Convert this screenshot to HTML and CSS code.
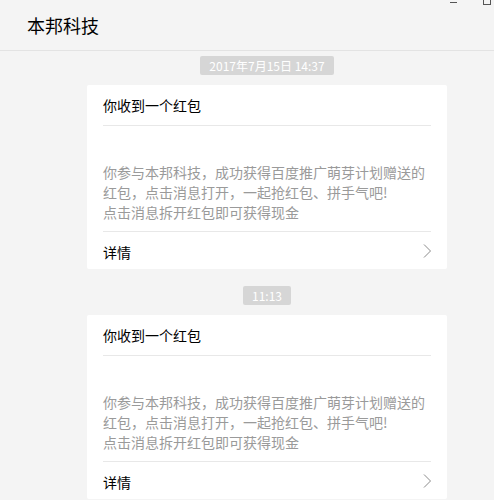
FILE: index.html
```html
<!DOCTYPE html>
<html lang="zh">
<head>
<meta charset="utf-8">
<link rel="stylesheet" href="styles.css">
</head>
<body>
<div class="window">
  <header class="header">
    <h1 class="title">本邦科技</h1>
    <div class="win-btns">
      <span class="win-min"></span>
      <span class="win-max"></span>
    </div>
  </header>
  <main class="feed">
    <div class="stamp-row"><span class="stamp">2017年7月15日 14:37</span></div>
    <section class="card">
      <div class="card-title">你收到一个红包</div>
      <div class="card-body">你参与本邦科技，成功获得百度推广萌芽计划赠送的红包，点击消息打开，一起抢红包、拼手气吧!<br>点击消息拆开红包即可获得现金</div>
      <div class="card-foot">
        <span>详情</span>
        <svg class="chev" width="9" height="14" viewBox="0 0 9 14"><polyline points="1,0.5 7.5,7 1,13.5" fill="none" stroke="#8a8a8a" stroke-width="1"/></svg>
      </div>
    </section>
    <div class="stamp-row second"><span class="stamp">11:13</span></div>
    <section class="card">
      <div class="card-title">你收到一个红包</div>
      <div class="card-body">你参与本邦科技，成功获得百度推广萌芽计划赠送的红包，点击消息打开，一起抢红包、拼手气吧!<br>点击消息拆开红包即可获得现金</div>
      <div class="card-foot">
        <span>详情</span>
        <svg class="chev" width="9" height="14" viewBox="0 0 9 14"><polyline points="1,0.5 7.5,7 1,13.5" fill="none" stroke="#8a8a8a" stroke-width="1"/></svg>
      </div>
    </section>
  </main>
</div>
</body>
</html>
```
FILE: styles.css
```css
html, body {
  margin: 0;
  padding: 0;
  background: #f4f4f4;
  font-family: "Noto Sans CJK SC", "Noto Sans", sans-serif;
}
.window {
  width: 494px;
  height: 500px;
  overflow: hidden;
  position: relative;
}
.header {
  height: 50px;
  border-bottom: 1px solid #e3e3e3;
  padding-left: 27px;
  box-sizing: content-box;
  position: relative;
}
.title {
  margin: 0;
  font-size: 18px;
  font-weight: normal;
  color: #000;
  line-height: 50px;
}
.win-min {
  position: absolute;
  left: 450px;
  top: 2px;
  width: 7px;
  height: 1px;
  background: #555;
}
.win-max {
  position: absolute;
  left: 483px;
  top: -4px;
  width: 6px;
  height: 7px;
  border: 1px solid #555;
}
.feed {
  width: 360px;
  margin-left: 87px;
  padding-top: 5px;
}
.stamp-row {
  display: flex;
  justify-content: center;
  margin-bottom: 10px;
}
.stamp-row.second {
  margin-top: 17px;
}
.stamp {
  background: #d6d6d6;
  color: #fff;
  font-size: 12px;
  line-height: 19px;
  height: 19px;
  padding: 0 9px;
  border-radius: 2px;
}
.card {
  background: #fff;
  border-radius: 2px;
  padding: 0 16px;
}
.card-title {
  height: 40px;
  line-height: 40px;
  font-size: 14px;
  color: #000;
  border-bottom: 1px solid #e8e8e8;
}
.card-body {
  padding: 36px 0 9px;
  font-size: 14px;
  line-height: 20px;
  color: #9a9a9a;
  border-bottom: 1px solid #e8e8e8;
}
.card-foot {
  height: 37px;
  padding-top: 3px;
  box-sizing: border-box;
  display: flex;
  align-items: center;
  justify-content: space-between;
  font-size: 14px;
  color: #000;
}
.chev {
  margin-right: -1px;
  margin-top: -2px;
}
```
